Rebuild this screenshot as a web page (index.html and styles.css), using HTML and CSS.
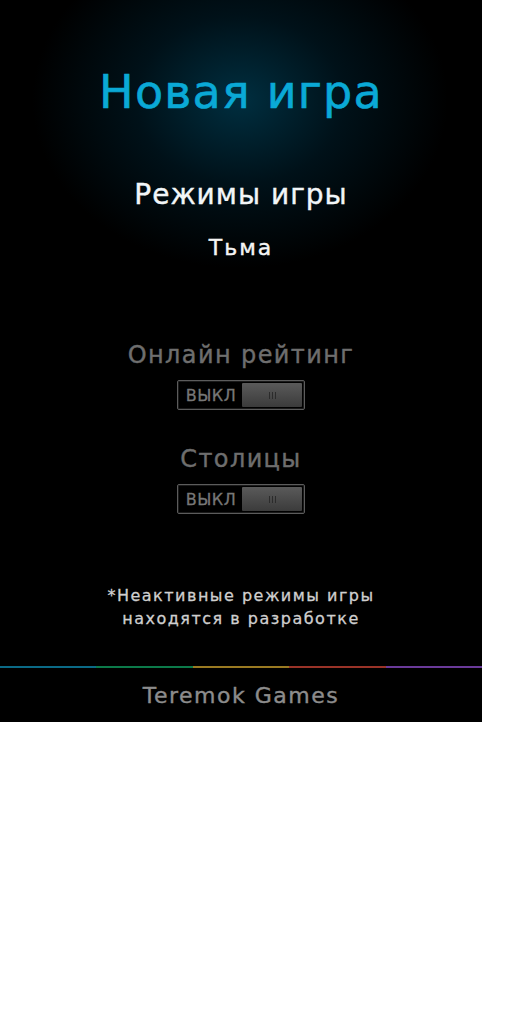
FILE: index.html
```html
<!DOCTYPE html>
<html lang="ru">
<head>
<meta charset="utf-8">
<link rel="stylesheet" href="styles.css">
</head>
<body>
<div class="screen">
  <div class="glow"></div>
  <main class="content">
    <h1 class="title">Новая игра</h1>
    <h2 class="subtitle">Режимы игры</h2>
    <div class="mode">Тьма</div>
    <div class="option first">
      <div class="opt-label">Онлайн рейтинг</div>
      <div class="toggle"><span class="t-text">ВЫКЛ</span><span class="knob"><span class="grip"></span></span></div>
    </div>
    <div class="option">
      <div class="opt-label">Столицы</div>
      <div class="toggle"><span class="t-text">ВЫКЛ</span><span class="knob"><span class="grip"></span></span></div>
    </div>
    <p class="note">*Неактивные режимы игры<br>находятся в разработке</p>
  </main>
  <div class="rainbow"><i class="c1"></i><i class="c2"></i><i class="c3"></i><i class="c4"></i><i class="c5"></i></div>
  <footer class="footer">Teremok Games</footer>
</div>
</body>
</html>
```
FILE: styles.css
```css
html, body { margin: 0; padding: 0; background: #fff; }
body { font-family: "DejaVu Sans", "Noto Sans", sans-serif; }
.screen {
  position: relative;
  width: 482px;
  height: 722px;
  background: #000;
  display: flex;
  flex-direction: column;
  overflow: hidden;
}
.glow {
  position: absolute;
  left: 30px; top: -70px;
  width: 420px; height: 340px;
  background: radial-gradient(ellipse at center, rgba(0,62,85,0.75) 0%, rgba(0,38,55,0.45) 35%, rgba(0,0,0,0) 70%);
}
.content {
  position: relative;
  flex: 1;
  display: flex;
  flex-direction: column;
  align-items: center;
  text-align: center;
}
.title {
  margin: 64px 0 0;
  font-size: 46px;
  line-height: 56px;
  font-weight: 400;
  color: #0aa9d6;
  letter-spacing: 1.2px;
  -webkit-text-stroke: 0.6px #0aa9d6;
}
.subtitle {
  margin: 58px 0 0;
  font-size: 28px;
  line-height: 34px;
  font-weight: 400;
  color: #f2f6f8;
  letter-spacing: 1px;
  -webkit-text-stroke: 0.4px #f2f6f8;
}
.mode {
  margin-top: 22px;
  font-size: 22px;
  line-height: 28px;
  color: #f4f4f4;
  letter-spacing: 2px;
  -webkit-text-stroke: 0.4px #f4f4f4;
}
.option { display: flex; flex-direction: column; align-items: center; }
.option.first { margin-top: 78px; }
.option + .option { margin-top: 34px; }
.opt-label {
  font-size: 24px;
  line-height: 30px;
  color: #6e6e6e;
  letter-spacing: 1.4px;
  -webkit-text-stroke: 0.4px #6e6e6e;
}
.toggle {
  margin-top: 10px;
  box-sizing: border-box;
  width: 128px; height: 30px;
  border: 1px solid #5c5c5c;
  border-radius: 2px;
  padding: 2px;
  display: flex;
  align-items: center;
  box-shadow: inset 0 0 0 1px #1a1a1a;
}
.t-text {
  width: 62px;
  font-size: 16px;
  color: #777;
  letter-spacing: 0.5px;
  -webkit-text-stroke: 0.3px #777;
}
.knob {
  flex: 1;
  height: 24px;
  background: linear-gradient(#5a5a5a, #3b3b3b);
  border-radius: 1px;
  display: flex;
  align-items: center;
  justify-content: center;
}
.grip {
  width: 7px; height: 7px;
  background: repeating-linear-gradient(90deg, #2b2b2b 0 1px, transparent 1px 3px);
}
.note {
  margin: 70px 0 0;
  font-size: 16px;
  line-height: 23px;
  color: #cfcfcf;
  letter-spacing: 1.5px;
  -webkit-text-stroke: 0.3px #cfcfcf;
}
.rainbow { display: flex; height: 2px; }
.rainbow i { flex: 1; }
.c1 { background: #0b6a86; }
.c2 { background: #0c7a4a; }
.c3 { background: #9a7a22; }
.c4 { background: #9a3328; }
.c5 { background: #6a3a9a; }
.footer {
  height: 54px;
  display: flex;
  align-items: center;
  justify-content: center;
  font-size: 22px;
  color: #8c8c8c;
  letter-spacing: 1.5px;
  -webkit-text-stroke: 0.4px #8c8c8c;
}
```
